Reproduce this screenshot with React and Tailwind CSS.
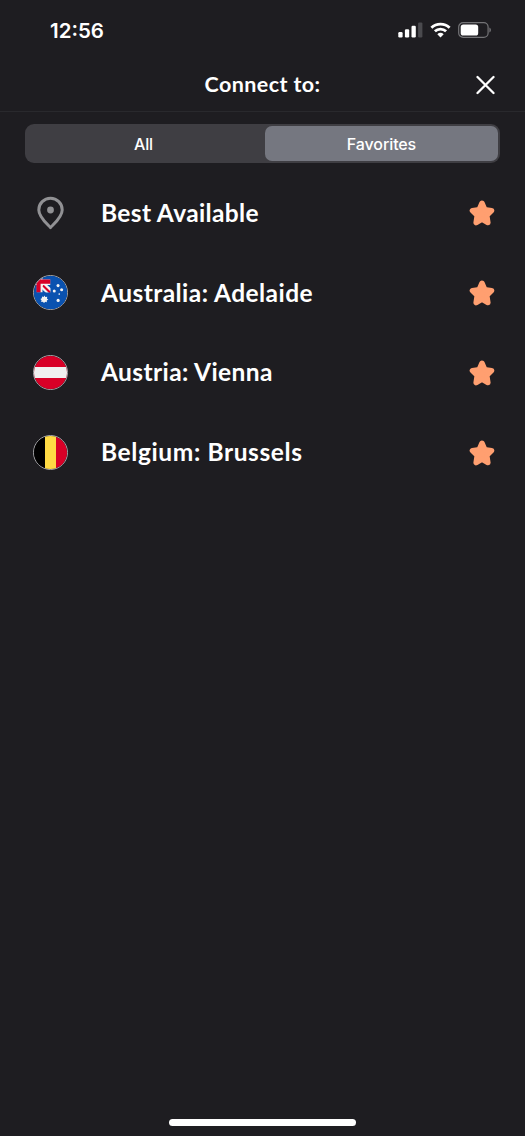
const AustraliaFlag = () => (
  <svg viewBox="0 0 35 35" className="size-full">
    <rect width="35" height="35" fill="#0a52b0" />
    <path d="M6 7 L17.5 17.5" stroke="#f3f3f3" strokeWidth="7" />
    <path d="M9.5 10 L17 17.5" stroke="#d80027" strokeWidth="2.2" />
    <path d="M0 6.6 H17.5 M6 0 V17.5" stroke="#f3f3f3" strokeWidth="6" />
    <path d="M0 6 H17.5 M4.8 0 V17.5" stroke="#d80027" strokeWidth="4.4" />
    <rect y="17.5" width="35" height="17.5" fill="#0a52b0" />
    <rect x="17.5" width="17.5" height="35" fill="#0a52b0" />
    <g fill="#f3f3f3">
      <path d="M11 20.8 L12 22.2 L14 22 L13.8 24 L15.2 25 L13.6 25.9 L13.6 27.9 L11.7 27.4 L10.6 28.9 L9.6 27.3 L7.6 27.6 L8 25.6 L6.8 24.5 L8.3 23.7 L8.5 21.7 L10.2 22.2 Z" />
      <circle cx="25.5" cy="10.2" r="1.6" />
      <circle cx="21.5" cy="16" r="1.6" />
      <circle cx="29.3" cy="14.6" r="1.6" />
      <circle cx="26.8" cy="19.1" r="0.9" />
      <circle cx="25.6" cy="25.9" r="1.7" />
    </g>
  </svg>
)

const AustriaFlag = () => (
  <div className="flex size-full flex-col bg-[#d80027]">
    <div className="my-auto h-[11px] bg-[#f0f0f0]"></div>
  </div>
)

const BelgiumFlag = () => (
  <div className="grid size-full grid-cols-3">
    <div className="bg-black"></div>
    <div className="bg-[#ffda44]"></div>
    <div className="bg-[#d80027]"></div>
  </div>
)

const Pin = () => (
  <svg viewBox="0 0 28 34" className="h-[34px] w-7" fill="none">
    <path
      d="M14.5 31.6 C11.3 28 2.8 21 2.8 13.9 A11.7 11.7 0 0 1 26.2 13.9 C26.2 21 17.7 28 14.5 31.6 Z"
      stroke="#919194"
      strokeWidth="3"
      strokeLinejoin="round"
    />
    <circle cx="14.5" cy="14" r="3.4" fill="#919194" />
  </svg>
)

const Star = () => (
  <svg viewBox="0 0 26 26" className="mt-px size-[26px]">
    <path
      d="M13 3.2 L15.8 9.6 L22.6 10.6 L17.8 15.4 L18.9 22.6 L13 19.2 L7.1 22.6 L8.2 15.4 L3.4 10.6 L10.2 9.6 Z"
      fill="#ff9f70"
      stroke="#ff9f70"
      strokeWidth="5.4"
      strokeLinejoin="round"
    />
  </svg>
)

const StatusBar = () => (
  <div className="flex h-[60px] items-center justify-between pl-[50px] pr-[33.5px] text-white">
    <span className="pt-px font-[Inter] text-[20.5px] font-semibold leading-6">12:56</span>
    <div className="flex items-center gap-[7px]">
      <svg viewBox="0 0 25 16" className="h-4 w-[25px]" fill="currentColor">
        <rect x="0.3" y="10" width="4.3" height="5.5" rx="1.2" />
        <rect x="6.9" y="7.3" width="4.3" height="8.2" rx="1.2" />
        <rect x="13.5" y="3.7" width="4.3" height="11.8" rx="1.2" />
        <rect x="20.1" y="0.4" width="4.3" height="15.1" rx="1.2" fill="#4a4a4e" />
      </svg>
      <svg viewBox="0 0 21 16" className="h-4 w-[21px]" fill="none" stroke="currentColor" strokeWidth="2.8">
        <path d="M1.4 5.8 A13 13 0 0 1 19.6 5.8" />
        <path d="M4.9 9.3 A8.2 8.2 0 0 1 16.1 9.3" />
        <path d="M10.5 15.5 L7.3 12.2 A4.7 4.7 0 0 1 13.7 12.2 Z" fill="currentColor" stroke="none" />
      </svg>
      <svg viewBox="0 0 34 16" className="h-4 w-[34px]">
        <rect x="0.7" y="0.7" width="29.4" height="14.6" rx="4.4" fill="none" stroke="#747477" strokeWidth="1.2" />
        <rect x="2.7" y="2.5" width="17.5" height="11" rx="2.6" fill="#fff" />
        <path d="M31.4 5.5 C33.4 6.2 33.4 9.8 31.4 10.5 Z" fill="#77777a" />
      </svg>
    </div>
  </div>
)

const Header = () => (
  <div className="relative flex h-[52px] items-center justify-center border-b border-[#29292d] pb-[3px]">
    <h1 className="font-[Lato] text-[21.5px] font-bold leading-7 tracking-[0.4px] text-white">Connect to:</h1>
    <button aria-label="Close" className="absolute right-[30px] top-[15px]">
      <svg viewBox="0 0 20 20" className="size-5" stroke="#fff" strokeWidth="2.3" strokeLinecap="round">
        <path d="M2.5 2 L18.5 18 M18.5 2 L2.5 18" />
      </svg>
    </button>
  </div>
)

const Tabs = () => (
  <div className="ml-[25px] mr-[25px] mt-3 flex h-[39px] rounded-[9px] bg-[#3f3e43] p-[2px] font-[Inter] text-[16px] text-white">
    <button className="w-[238px] pr-[5px] font-medium tracking-[-0.2px]">All</button>
    <button className="flex-1 rounded-[7px] bg-[#757780] font-medium tracking-[-0.1px]">Favorites</button>
  </div>
)

const locations = [
  { name: "Best Available", spacing: "tracking-[0.36px]" },
  { name: "Australia: Adelaide", spacing: "tracking-[0.45px]" , Flag: AustraliaFlag },
  { name: "Austria: Vienna", spacing: "tracking-[0.39px]", Flag: AustriaFlag },
  { name: "Belgium: Brussels", spacing: "tracking-[0.61px]", Flag: BelgiumFlag },
]

const Location = ({ name, spacing, Flag }) => (
  <li className="flex h-[79.8px] items-center pl-[33px] pr-[30px]">
    <div className="flex w-[68px] items-center">
      {Flag ? (
        <div className="size-[35px] overflow-hidden rounded-full border border-[#a5a5a8]">
          <Flag />
        </div>
      ) : (
        <div className="ml-[3px]">
          <Pin />
        </div>
      )}
    </div>
    <span className={`flex-1 font-[Lato] text-[24.5px] font-bold leading-8 text-white ${spacing}`}>{name}</span>
    <Star />
  </li>
)

const App = () => {
  return (
    <div className="flex h-[1136px] w-[525px] flex-col bg-[#1e1d21]">
      <StatusBar />
      <Header />
      <Tabs />
      <ul className="mt-[10px]">
        {locations.map((location) => (
          <Location key={location.name} {...location} />
        ))}
      </ul>
      <div className="mx-auto mb-[10px] mt-auto h-[7px] w-[187px] rounded-full bg-white"></div>
    </div>
  )
}

export default App
